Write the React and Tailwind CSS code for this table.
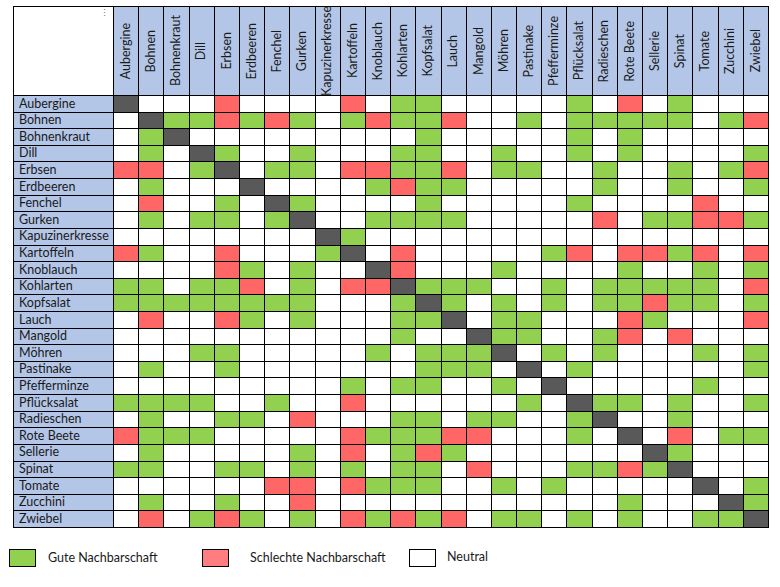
import React from "react";

const plants = [
  "Aubergine", "Bohnen", "Bohnenkraut", "Dill", "Erbsen", "Erdbeeren", "Fenchel",
  "Gurken", "Kapuzinerkresse", "Kartoffeln", "Knoblauch", "Kohlarten", "Kopfsalat",
  "Lauch", "Mangold", "Möhren", "Pastinake", "Pfefferminze", "Pflücksalat",
  "Radieschen", "Rote Beete", "Sellerie", "Spinat", "Tomate", "Zucchini", "Zwiebel",
];

// G = gut, R = schlecht, . = neutral, D = gleiche Pflanze
const matrix = [
  "D...R....R.GG.....G.R.G...",
  ".DGGRGRG.GRGGR..G.GGGGG.GR",
  ".GD.........G.....G.G.....",
  ".G.DG..G...GG..G..G.G....G",
  "RR.GD.GG.RRGGR.GG..G..G.GR",
  ".G...D....GRGG.....G..G..G",
  ".R..G.DG....G.....G....R..",
  ".G.GG.GD..GGGG.....R.GGRRG",
  "........DG................",
  "RG..R...GD.R.....GR.RRGR.R",
  "....RG.G..DR...G....G..G.G",
  "GG.GGR.G.RRDGGG..G.GGGGG.R",
  "GGGGGGGG...GDG.G.G.GGRGG.G",
  ".R..RG.G...GGD.GG...RG...R",
  "...........G..DGG..GR.R...",
  "...GG.....G.GGGD.G.G...G.G",
  ".G..G.......GGG.D.G......G",
  ".........G.GG..G.D.....G..",
  "GGGG..G..R......G.DGG.G..G",
  ".G..GG.R...GG.GG..GD..G...",
  "RGGG.....RGGGRR...G.D.R.GG",
  ".G.....G.R.GRG.......DG...",
  "GG..GG.G.G.GG.R...GGRGD...",
  "......RR.RGGG..G.G.....D.G",
  ".G..G..R............G...DG",
  ".R.GRG.G.RGRGR.GG.G.G..GGD",
];

const cellClass = {
  G: "bg-[#92d050]",
  R: "bg-[#ff6666]",
  D: "bg-[#595959]",
  ".": "bg-white",
};

export default function App() {
  return (
    <div className="w-[780px] h-[587px] bg-white font-['Lato','Open_Sans',sans-serif] text-[#1a1a1a]">
      <div className="pt-[6px] pl-[13px]">
        <div className="grid w-[756px] h-[522px] grid-cols-[99px_repeat(26,1fr)] grid-rows-[88px_repeat(26,1fr)] gap-px p-px bg-black">
          <div className="bg-white relative">
            <span className="absolute top-[1px] right-[4px] text-[9px] leading-none text-gray-500">⋮</span>
          </div>
          {plants.map((p) => (
            <div
              key={"h" + p}
              className="bg-[#b4c6e7] flex items-center justify-center overflow-visible"
            >
              <span className="whitespace-nowrap text-[12.5px] leading-none [writing-mode:vertical-rl] rotate-180">
                {p}
              </span>
            </div>
          ))}
          {plants.map((p, r) => (
            <React.Fragment key={p}>
              <div className="bg-[#b4c6e7] flex items-center pl-[5px] text-[12.5px] leading-none whitespace-nowrap">
                {p}
              </div>
              {matrix[r].split("").map((c, i) => (
                <div key={i} className={cellClass[c]} />
              ))}
            </React.Fragment>
          ))}
        </div>
      </div>

      {/* Legende */}
      <div className="flex items-center mt-[21px] pl-[9px] text-[12.5px]">
        <div className="w-[27px] h-[18px] border border-black bg-[#92d050]" />
        <span className="ml-[12px] w-[154px]">Gute Nachbarschaft</span>
        <div className="w-[27px] h-[18px] border border-black bg-[#ff7c80]" />
        <span className="ml-[21px] w-[159px]">Schlechte Nachbarschaft</span>
        <div className="w-[27px] h-[18px] border border-black bg-white" />
        <span className="ml-[11px] -mt-[3px]">Neutral</span>
      </div>
    </div>
  );
}
